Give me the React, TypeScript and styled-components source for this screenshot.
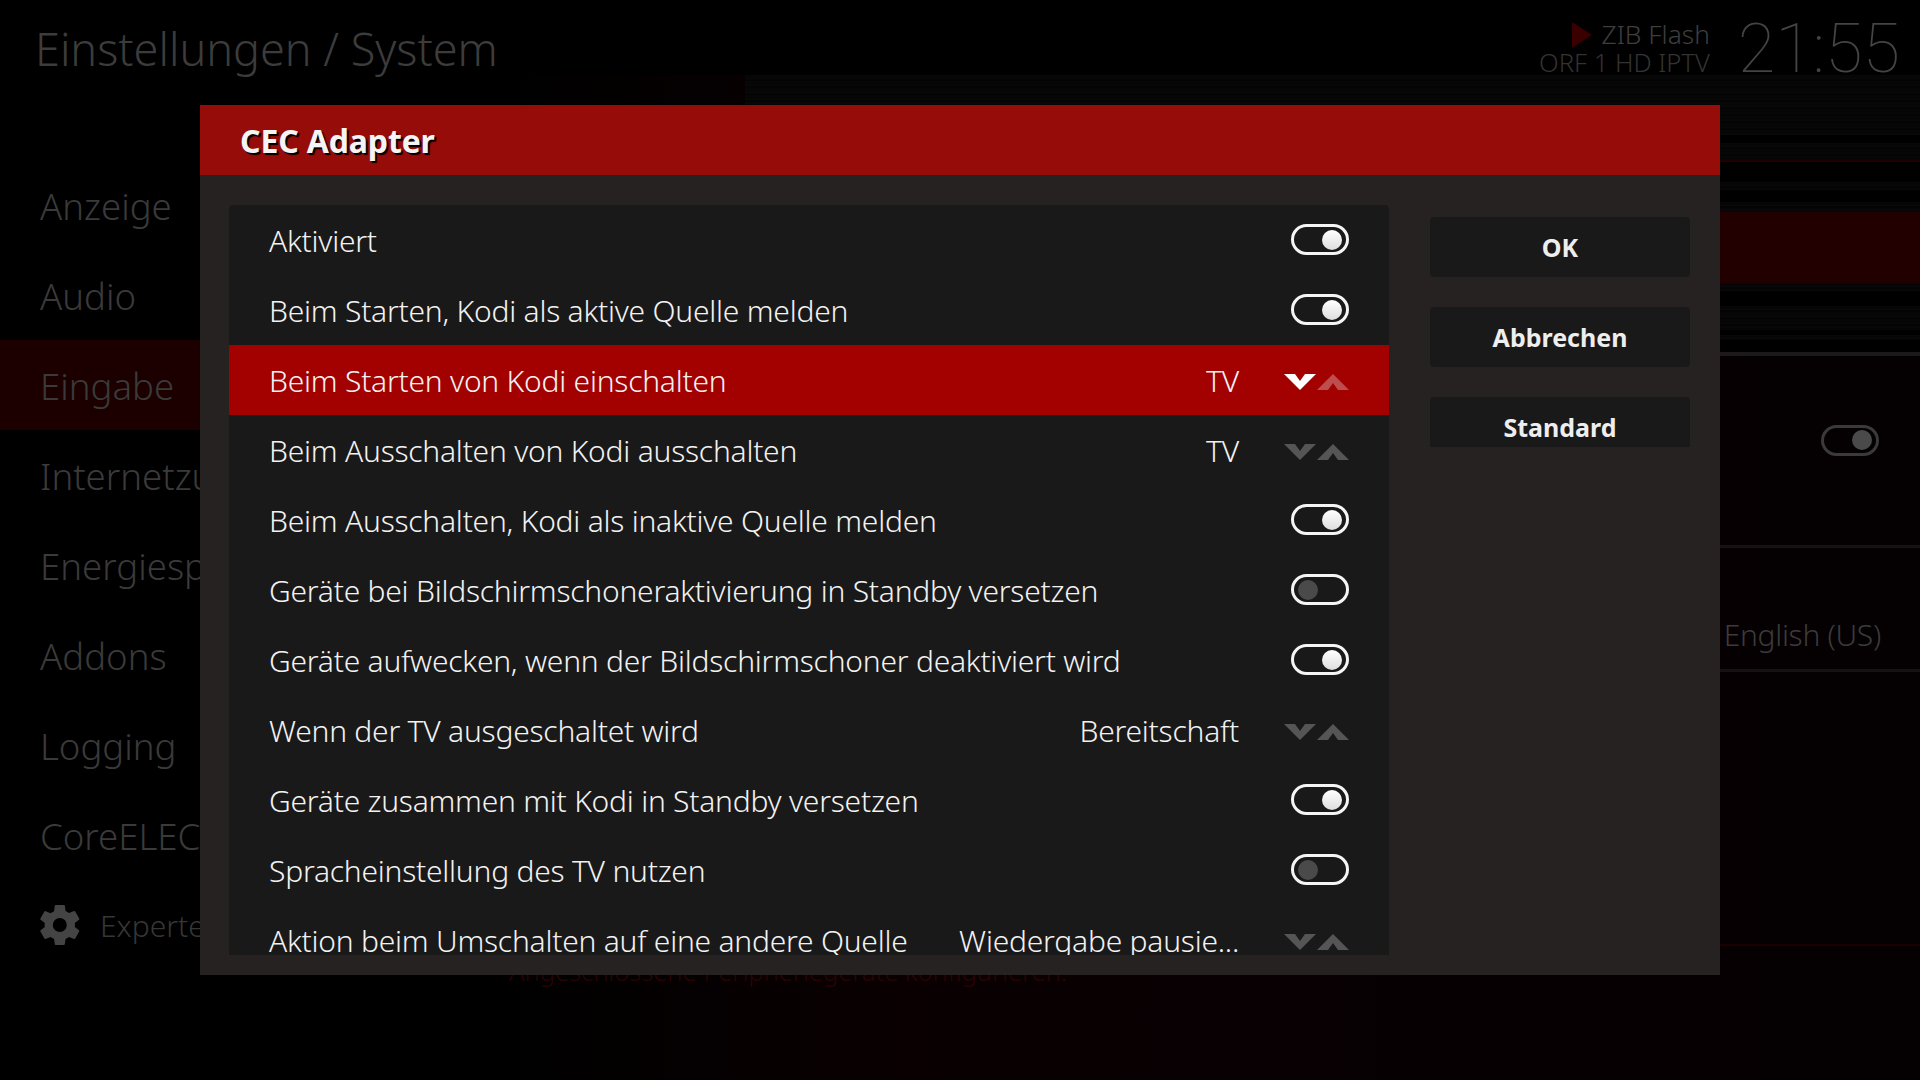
import React from 'react';
import styled, { createGlobalStyle } from 'styled-components';

const GlobalStyle = createGlobalStyle`
  html, body {
    margin: 0;
    padding: 0;
    background: #000;
    font-family: 'Noto Sans', sans-serif;
  }
`

const Screen = styled.div`
  position: relative;
  width: 1920px;
  height: 1080px;
  overflow: hidden;
  background: #000;
  display: flex;
  flex-direction: column;
`
const TopBar = styled.div`
  height: 95px;
  display: flex;
  align-items: center;
  justify-content: space-between;
  padding: 0 20px 0 35px;
  flex-shrink: 0;
`
const Title = styled.div`
  font-size: 45px;
  font-weight: 300;
  color: #3c3c3c;
  margin-top: 2px;
`
const TopRight = styled.div`
  display: flex;
  align-items: center;
  gap: 28px;
`
const NowPlaying = styled.div`
  text-align: right;
  font-weight: 300;
  color: #333;
`
const NowTitle = styled.div`
  display: flex;
  align-items: center;
  justify-content: flex-end;
  gap: 10px;
  font-size: 26.3px;
  line-height: 31px;
  color: #3e3e3e;
`
const NowChannel = styled.div`
  font-size: 25.6px;
  line-height: 26px;
`
const Clock = styled.div`
  font-family: Roboto, sans-serif;
  font-size: 68.5px;
  font-weight: 100;
  color: #444;
  line-height: 80px;
  margin-top: 3px;
`
const Main = styled.div`
  flex: 1;
  display: flex;
  padding-top: 65px;
`
const Sidebar = styled.div`
  width: 470px;
  flex-shrink: 0;
`
const MenuItem = styled.div<{ $active?: boolean }>`
  height: 90px;
  line-height: 93px;
  padding-left: 40px;
  font-size: 36.6px;
  font-weight: 300;
  color: #3a3a3a;
  background: ${p => (p.$active ? '#1c0000' : 'transparent')};
`
const ExpertRow = styled.div`
  height: 90px;
  display: flex;
  align-items: center;
  gap: 16px;
  padding-left: 36px;
  font-size: 30px;
  font-weight: 300;
  color: #363636;
`
const Content = styled.div`
  flex: 1;
  display: flex;
  flex-direction: column;
  margin-top: -85px;
  background: linear-gradient(to right, #000 0, #0a0002 30%, #050002 100%);
`
const NoiseStack = styled.div`
  margin-left: 275px;
  display: flex;
  flex-direction: column;
`
const Band = styled.div<{ $height: number; $kind: 'noise' | 'black' | 'hot' | 'rule' | 'line' }>`
  height: ${p => p.$height}px;
  background: ${p =>
    p.$kind === 'noise'
      ? 'repeating-linear-gradient(to bottom, #0a0909 0, #040404 2px, #0b0a0a 3px, #030303 5px, #080707 7px)'
      : p.$kind === 'hot'
        ? '#220000'
        : p.$kind === 'rule'
          ? '#200000'
          : p.$kind === 'line'
            ? '#1b1919'
            : '#000'};
`
const PanelRow = styled.div<{ $height: number; $text?: boolean }>`
  height: ${p => p.$height}px;
  box-sizing: border-box;
  display: flex;
  justify-content: flex-end;
  align-items: ${p => (p.$text ? 'flex-end' : 'center')};
  padding: 0 39px ${p => (p.$text ? 14 : 20)}px 0;
  border-bottom: 3px solid #141212;
  font-size: 30px;
  font-weight: 300;
  letter-spacing: -0.3px;
  color: #3b3b3b;
`
const PanelFoot = styled.div`
  flex: 1;
  display: flex;
  flex-direction: column;
`
const RedRule = styled.div`
  height: 2px;
  margin-top: 272px;
  background: #1c0000;
`
const Description = styled.div`
  margin-top: 8px;
  padding-left: 39px;
  font-size: 25.5px;
  font-weight: 300;
  color: #2c0303;
`

const Dialog = styled.div`
  position: absolute;
  left: 200px;
  top: 105px;
  width: 1520px;
  height: 870px;
  background: #272222;
  display: flex;
  flex-direction: column;
`
const DialogHeader = styled.div`
  height: 70px;
  flex-shrink: 0;
  background: #960c09;
  display: flex;
  align-items: center;
  padding-left: 40px;
  font-size: 32px;
  font-weight: 700;
  letter-spacing: -0.15px;
  color: #f4f4f4;
  text-shadow: 2px 2px 1px #000;
`
const DialogBody = styled.div`
  display: flex;
  padding: 30px 30px 0 29px;
  gap: 41px;
`
const List = styled.div`
  width: 1160px;
  height: 750px;
  overflow: hidden;
  background: #1a1919;
  border-radius: 4px 4px 0 0;
`
const Row = styled.div<{ $focused?: boolean }>`
  height: 70px;
  display: flex;
  align-items: center;
  justify-content: space-between;
  box-sizing: border-box;
  padding: 0 40px 0 40px;
  font-size: 30px;
  font-weight: 300;
  letter-spacing: -0.23px;
  color: #f2f2f2;
  white-space: nowrap;
  background: ${p => (p.$focused ? '#a30000' : 'transparent')};
`
const Control = styled.div`
  display: flex;
  align-items: center;
  gap: 45px;
`
const Switch = styled.div<{ $on: boolean; $dim?: boolean }>`
  width: 58px;
  height: 31px;
  box-sizing: border-box;
  border: 3px solid ${p => (p.$dim ? '#3a3a3a' : '#f5f5f5')};
  border-radius: 16px;
  display: flex;
  align-items: center;
  justify-content: ${p => (p.$on ? 'flex-end' : 'flex-start')};
  padding: 0 4px;
  margin: -1px ${p => (p.$dim ? 2 : 0)}px 0 0;
  &::after {
    content: '';
    width: 20px;
    height: 20px;
    border-radius: 50%;
    background: ${p =>
      p.$dim || !p.$on ? '#4a4a4a' : 'linear-gradient(to bottom, #fff, #dedede)'};
  }
`
const Spinner = styled.div`
  display: flex;
  gap: 1px;
  margin-top: 4px;
`
const Arrow = styled.svg<{ $bright?: boolean; $faint?: boolean }>`
  width: 32px;
  height: 16px;
  fill: ${p => (p.$bright ? '#fff' : p.$faint ? 'rgba(255,255,255,.3)' : '#555')};
`
const Buttons = styled.div`
  padding-top: 12px;
  width: 260px;
  display: flex;
  flex-direction: column;
  gap: 30px;
`
const Button = styled.div<{ $clipped?: boolean }>`
  height: ${p => (p.$clipped ? 50 : 60)}px;
  background: #1a1919;
  border-radius: ${p => (p.$clipped ? '4px 4px 0 0' : '4px')};
  display: flex;
  align-items: ${p => (p.$clipped ? 'flex-start' : 'center')};
  justify-content: center;
  font-size: 25px;
  font-weight: 700;
  color: #eee;
  line-height: 60px;
`

const Spin = ({ focused }: { focused?: boolean }) => (
  <Spinner>
    <Arrow viewBox="0 0 32 16" $bright={focused}>
      <polygon points="0,0 11,0 16,7 21,0 32,0 16,16" />
    </Arrow>
    <Arrow viewBox="0 0 32 16" $faint={focused}>
      <polygon points="0,16 11,16 16,9 21,16 32,16 16,0" />
    </Arrow>
  </Spinner>
)

const GearIcon = () => (
  <svg width="48" height="48" viewBox="0 0 24 24" fill="#444">
    <path d="M19.4 13c.04-.33.06-.66.06-1s-.02-.67-.06-1l2.1-1.65a.5.5 0 0 0 .12-.64l-2-3.46a.5.5 0 0 0-.6-.22l-2.5 1a7.3 7.3 0 0 0-1.72-1l-.38-2.65A.5.5 0 0 0 13.9 2h-4a.5.5 0 0 0-.5.42l-.38 2.65c-.62.25-1.2.6-1.72 1l-2.5-1a.5.5 0 0 0-.6.22l-2 3.46a.5.5 0 0 0 .12.64L4.4 11c-.04.33-.07.66-.07 1s.03.67.07 1l-2.08 1.65a.5.5 0 0 0-.12.64l2 3.46c.12.22.38.3.6.22l2.5-1c.52.4 1.1.75 1.72 1l.38 2.65c.05.24.26.42.5.42h4c.25 0 .46-.18.5-.42l.38-2.65c.62-.25 1.2-.6 1.72-1l2.5 1c.22.08.48 0 .6-.22l2-3.46a.5.5 0 0 0-.12-.64L19.4 13zM11.9 15.5a3.5 3.5 0 1 1 0-7 3.5 3.5 0 0 1 0 7z" />
  </svg>
)

type Setting = { label: string; on?: boolean; value?: string; focused?: boolean }

const settings: Setting[] = [
  { label: 'Aktiviert', on: true },
  { label: 'Beim Starten, Kodi als aktive Quelle melden', on: true },
  { label: 'Beim Starten von Kodi einschalten', value: 'TV', focused: true },
  { label: 'Beim Ausschalten von Kodi ausschalten', value: 'TV' },
  { label: 'Beim Ausschalten, Kodi als inaktive Quelle melden', on: true },
  { label: 'Geräte bei Bildschirmschoneraktivierung in Standby versetzen', on: false },
  { label: 'Geräte aufwecken, wenn der Bildschirmschoner deaktiviert wird', on: true },
  { label: 'Wenn der TV ausgeschaltet wird', value: 'Bereitschaft' },
  { label: 'Geräte zusammen mit Kodi in Standby versetzen', on: true },
  { label: 'Spracheinstellung des TV nutzen', on: false },
  { label: 'Aktion beim Umschalten auf eine andere Quelle', value: 'Wiedergabe pausie...' },
]

const menu = ['Anzeige', 'Audio', 'Eingabe', 'Internetzugriff', 'Energiesparen', 'Addons', 'Logging', 'CoreELEC']

// stripes of the video frame left behind the dim layer, from y=75 down
const bands: { height: number; kind: 'noise' | 'black' | 'hot' | 'rule' | 'line' }[] = [
  { height: 60, kind: 'noise' },
  { height: 8, kind: 'black' },
  { height: 17, kind: 'noise' },
  { height: 2, kind: 'rule' },
  { height: 20, kind: 'black' },
  { height: 8, kind: 'noise' },
  { height: 12, kind: 'black' },
  { height: 10, kind: 'noise' },
  { height: 71, kind: 'hot' },
  { height: 8, kind: 'noise' },
  { height: 15, kind: 'black' },
  { height: 24, kind: 'noise' },
  { height: 5, kind: 'black' },
  { height: 5, kind: 'noise' },
  { height: 12, kind: 'black' },
  { height: 4, kind: 'line' },
]

const App: React.FC = () => {
  return (
    <Screen>
      <GlobalStyle />
      <TopBar>
        <Title>Einstellungen / System</Title>
        <TopRight>
          <NowPlaying>
            <NowTitle>
              <svg width="20" height="26" viewBox="0 0 20 26" fill="#3a0000">
                <polygon points="0,0 20,13 0,26" />
              </svg>
              ZIB Flash
            </NowTitle>
            <NowChannel>ORF 1 HD IPTV</NowChannel>
          </NowPlaying>
          <Clock>21:55</Clock>
        </TopRight>
      </TopBar>
      <Main>
        <Sidebar>
          {menu.map(item => (
            <MenuItem key={item} $active={item === 'Eingabe'}>{item}</MenuItem>
          ))}
          <ExpertRow>
            <GearIcon />
            Experte
          </ExpertRow>
        </Sidebar>
        <Content>
          <NoiseStack>
            {bands.map((b, i) => (
              <Band key={i} $height={b.height} $kind={b.kind} />
            ))}
          </NoiseStack>
          <PanelRow $height={192}>
            <Switch $on $dim />
          </PanelRow>
          <PanelRow $height={124} $text>English (US)</PanelRow>
          <PanelFoot>
            <RedRule />
            <Description>Angeschlossene Peripheriegeräte konfigurieren.</Description>
          </PanelFoot>
        </Content>
      </Main>

      <Dialog>
        <DialogHeader>CEC Adapter</DialogHeader>
        <DialogBody>
          <List>
            {settings.map(s => (
              <Row key={s.label} $focused={s.focused}>
                <span>{s.label}</span>
                {s.value ? (
                  <Control>
                    <span>{s.value}</span>
                    <Spin focused={s.focused} />
                  </Control>
                ) : (
                  <Switch $on={!!s.on} />
                )}
              </Row>
            ))}
          </List>
          <Buttons>
            <Button>OK</Button>
            <Button>Abbrechen</Button>
            <Button $clipped>Standard</Button>
          </Buttons>
        </DialogBody>
      </Dialog>
    </Screen>
  )
}

export default App
